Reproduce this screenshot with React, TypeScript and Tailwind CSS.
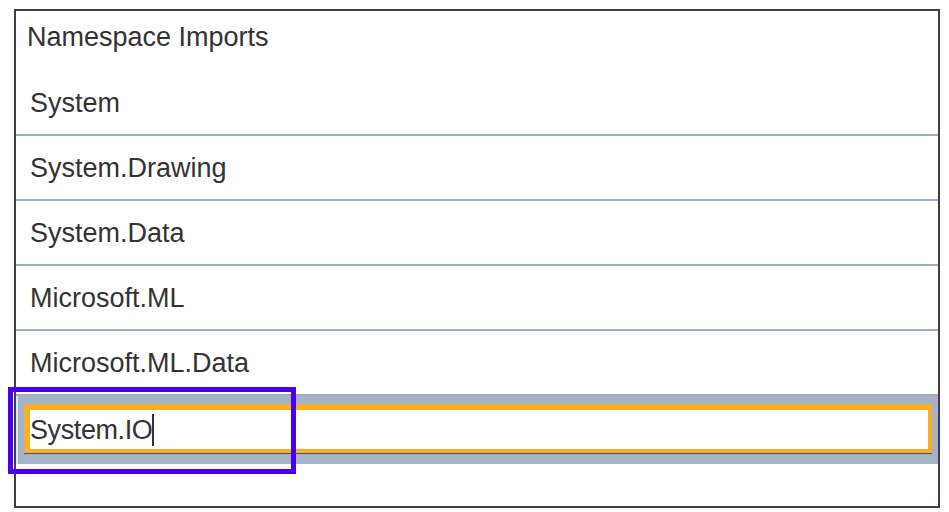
const rows = ['System', 'System.Drawing', 'System.Data', 'Microsoft.ML', 'Microsoft.ML.Data']

export default function App() {
  return (
    <div className="w-[949px] h-[512px] bg-white relative overflow-hidden font-['Liberation_Sans',Arial,sans-serif] text-[27px] text-[#353234]">
      <div className="ml-[14px] mt-[9px] w-[926px] h-[499px] border-2 border-[#3e3e4a] flex flex-col">
        <div className="h-[60px] pl-[11px] pt-[12px] leading-[28px]">Namespace Imports</div>
        {rows.map((r) => (
          <div
            key={r}
            className="h-[65px] shrink-0 flex items-center pl-[14px] border-b-2 border-[#a0acc3]"
          >
            <span className="leading-[28px]">{r}</span>
          </div>
        ))}
        <div className="h-[68px] shrink-0 bg-[#a5b3c9] pl-[6px] pr-[6px] pt-[8px] pb-[11px] border-l-2 border-[#dfe4ec]">
          <div className="h-full bg-white border-[#f4b02a] border-t-[6px] border-l-[6px] border-r-4 border-b-4 flex items-center shadow-[0_1px_0_#4a4f66]">
            <span className="leading-[28px] tracking-[-0.4px]">System.IO</span>
            <span className="w-[2px] h-[32px] bg-[#353234]" />
          </div>
        </div>
        <div className="flex-1" />
      </div>
      <div className="absolute left-[8px] top-[387px] w-[288px] h-[87px] border-[5px] border-[#4800ee]" />
    </div>
  )
}
